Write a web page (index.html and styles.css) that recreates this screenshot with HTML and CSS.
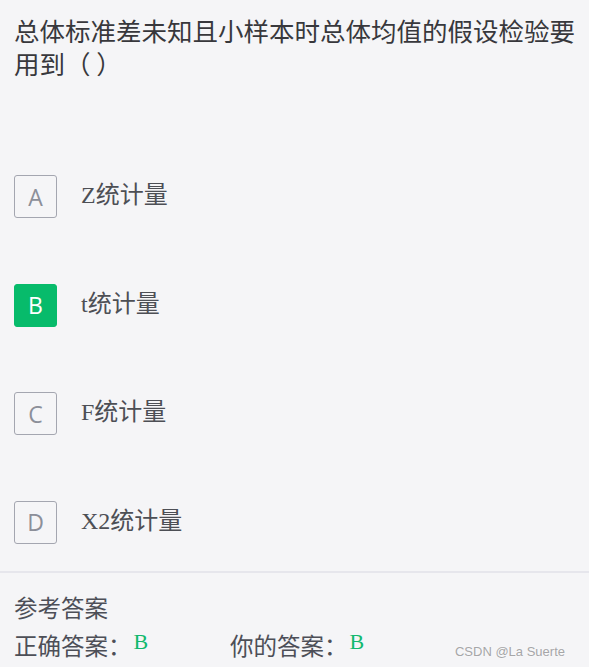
FILE: index.html
```html
<!DOCTYPE html>
<html lang="zh-CN">

<head>
  <meta charset="UTF-8">
  <meta name="viewport" content="width=device-width, initial-scale=1.0">
  <title>单选题</title>
  <link rel="stylesheet" href="styles.css">
</head>

<body>
  <div class="question">总体标准差未知且小样本时总体均值的假设检验要用到（ ）</div>

  <div class="options">
    <div class="option">
      <span class="letter">A</span>
      <span class="text">Z统计量</span>
    </div>
    <div class="option">
      <span class="letter active">B</span>
      <span class="text">t统计量</span>
    </div>
    <div class="option">
      <span class="letter">C</span>
      <span class="text">F统计量</span>
    </div>
    <div class="option">
      <span class="letter">D</span>
      <span class="text">X2统计量</span>
    </div>
  </div>

  <div class="answer">
    <p class="answer-title">参考答案</p>
    <div class="answer-row">
      <span class="answer-item">正确答案：<b class="answer-value">B</b></span>
      <span class="answer-item">你的答案：<b class="answer-value">B</b></span>
    </div>
  </div>

  <div class="watermark">CSDN @La Suerte</div>
</body>

</html>
```

FILE: styles.css
```css
body {
  margin: 0;
  padding: 0;
  background-color: #f5f5f7;
  font-family: "Noto Sans CJK SC", "Noto Sans", sans-serif;
  color: #333;
  position: relative;
  height: 667px;
  overflow: hidden;
}

.question {
  padding: 13px 14px 0;
  font-size: 25.5px;
  line-height: 33px;
  color: #38383c;
  text-spacing-trim: space-all;
}

.options {
  margin-top: 96px;
  padding: 0 14px;
  display: flex;
  flex-direction: column;
  gap: 65.5px;
}

.option {
  display: flex;
  align-items: center;
}

.letter {
  box-sizing: border-box;
  width: 43px;
  height: 43px;
  border: 1px solid #a4a6b0;
  border-radius: 3px;
  display: flex;
  justify-content: center;
  align-items: center;
  font-family: "Open Sans", "Noto Sans", sans-serif;
  font-size: 23px;
  color: #8c8f99;
}

.letter.active {
  background-color: #07bb6b;
  border-color: #07bb6b;
  color: #fff;
}

.text {
  margin-left: 24px;
  margin-bottom: 8px;
  font-family: "Liberation Serif", "Noto Sans CJK SC", serif;
  font-size: 24px;
  color: #4d4f55;
}

.answer {
  margin-top: 27px;
  border-top: 2px solid #e6e6ec;
  padding: 17px 14px 0;
  color: #4d4f57;
  font-size: 23.5px;
}

.answer-title {
  margin: 0;
  line-height: 34px;
}

.answer-row {
  display: flex;
  line-height: 42px;
}

.answer-item {
  width: 216px;
}

.answer-value {
  font-family: "Liberation Serif", serif;
  font-weight: normal;
  font-size: 22px;
  color: #12b96e;
  margin-left: 2px;
  position: relative;
  top: -6px;
}

.watermark {
  position: absolute;
  right: 24px;
  bottom: 8px;
  font-family: "Liberation Sans", Arial, sans-serif;
  font-size: 13px;
  color: #a6a6a8;
  text-shadow: 0 0 2px #fff;
}
```
